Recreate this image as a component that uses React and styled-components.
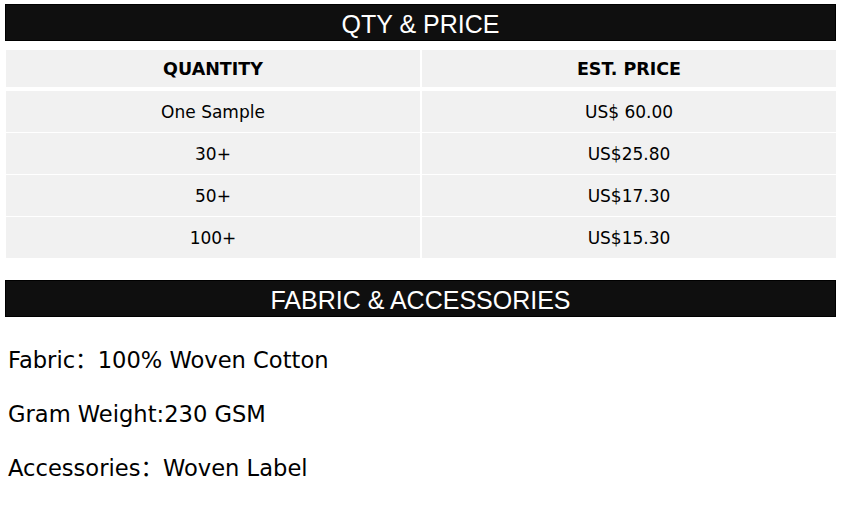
import React from 'react';
import styled, { createGlobalStyle } from 'styled-components';

const GlobalStyle = createGlobalStyle`
  html, body {
    margin: 0;
    padding: 0;
    background: #fff;
  }
  body {
    font-family: "DejaVu Sans", Verdana, "Noto Sans CJK SC", sans-serif;
    color: #000;
  }
`;

const Page = styled.div`
  width: 843px;
  padding: 4px 7px 0 5px;
  box-sizing: border-box;
`;

const TitleBar = styled.div`
  height: 37px;
  padding-top: 3px;
  background: #0f0f0f;
  border: 1px solid #000;
  box-sizing: border-box;
  display: flex;
  align-items: center;
  justify-content: center;
  color: #fff;
  font-family: "Liberation Sans", Arial, sans-serif;
  font-size: 25px;
  margin-top: ${props => props.top || 0}px;
`;

const Table = styled.div`
  display: grid;
  grid-template-columns: 1fr 1fr;
  column-gap: 2px;
  margin: 9px 0 0 1px;
`;

const Cell = styled.div`
  background: #f1f1f1;
  display: flex;
  align-items: center;
  justify-content: center;
  height: ${props => (props.head ? 37 : 41)}px;
  margin-bottom: ${props => (props.head ? 4 : 1)}px;
  font-size: ${props => (props.head ? 17.5 : 17)}px;
  font-weight: ${props => (props.head ? 'bold' : 'normal')};
`;

const Specs = styled.div`
  padding: 16px 0 0 3px;
`;

const Spec = styled.p`
  margin: 0;
  font-size: 22.6px;
  line-height: 54px;
`;

const rows = [
  ['One Sample', 'US$ 60.00'],
  ['30+', 'US$25.80'],
  ['50+', 'US$17.30'],
  ['100+', 'US$15.30'],
];

export default function App() {
  return (
    <Page>
      <GlobalStyle />
      <TitleBar>QTY &amp; PRICE</TitleBar>
      <Table>
        <Cell head>QUANTITY</Cell>
        <Cell head>EST. PRICE</Cell>
        {rows.map(([q, p]) => (
          <React.Fragment key={q}>
            <Cell>{q}</Cell>
            <Cell>{p}</Cell>
          </React.Fragment>
        ))}
      </Table>
      <TitleBar top={21}>FABRIC &amp; ACCESSORIES</TitleBar>
      <Specs>
        <Spec>Fabric：100% Woven Cotton</Spec>
        <Spec>Gram Weight:230 GSM</Spec>
        <Spec>Accessories：Woven Label</Spec>
      </Specs>
    </Page>
  );
}
